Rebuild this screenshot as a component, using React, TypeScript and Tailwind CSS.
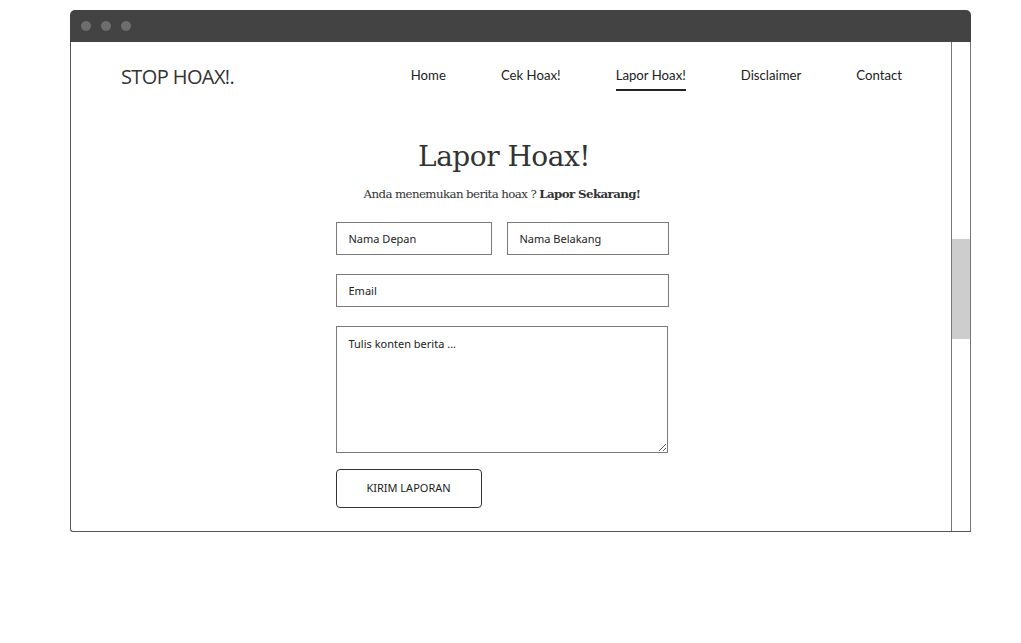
import React from 'react'

const navItems = ['Home', 'Cek Hoax!', 'Lapor Hoax!', 'Disclaimer', 'Contact']

export default function App() {
    return (
        <div className="min-h-[643px] bg-white pt-[10px] pl-[70px]">
            <div className="w-[901px]">
                {/* title bar */}
                <div className="h-[32px] bg-[#434343] rounded-t-[5px] flex items-center gap-[10px] pl-[11px]">
                    {[0, 1, 2].map(i => (
                        <span key={i} className="w-[10px] h-[10px] rounded-full bg-[#6e6e6e]" />
                    ))}
                </div>

                <div className="flex h-[490px] border-l border-b border-[#555] rounded-bl-[3px]">
                    <main className="flex-1 min-w-0 text-[#333]">
                        {/* header */}
                        <header className="flex justify-between items-start pt-[21px] pl-[50px] pr-[49px]">
                            <div className="text-[20px] leading-[28px] font-['Open_Sans',sans-serif] tracking-[-0.6px] text-[#333]">
                                STOP HOAX!.
                            </div>
                            <nav className="flex mt-[2px] gap-[55px] font-['Lato',sans-serif] text-[13.2px] leading-[20px] text-[#222]">
                                {navItems.map(item => (
                                    <a
                                        key={item}
                                        className={
                                            item === 'Lapor Hoax!'
                                                ? 'pb-[4px] border-b-2 border-[#222]'
                                                : 'pb-[4px] border-b-2 border-transparent'
                                        }
                                    >
                                        {item}
                                    </a>
                                ))}
                            </nav>
                        </header>

                        {/* form section */}
                        <section className="flex flex-col items-center pr-[18px]">
                            <h1 className="mt-[48px] ml-[4px] text-[28px] leading-[36px] font-['DejaVu_Serif',serif] tracking-[-0.5px] text-[#333]">
                                Lapor Hoax!
                            </h1>
                            <p className="mt-[10px] text-[11.8px] leading-[18px] font-['DejaVu_Serif',serif] tracking-[-0.6px] text-[#333]">
                                Anda menemukan berita hoax ? <b>Lapor Sekarang!</b>
                            </p>

                            <form className="mt-[19px] w-[333px] flex flex-col font-['Noto_Sans',sans-serif] text-[11px]">
                                <div className="flex gap-[15px]">
                                    <input
                                        placeholder="Nama Depan"
                                        className="w-[156px] h-[33px] border border-[#7a7a7a] px-[12px] outline-none placeholder:text-[#222]"
                                    />
                                    <input
                                        placeholder="Nama Belakang"
                                        className="w-[162px] h-[33px] border border-[#7a7a7a] px-[12px] outline-none placeholder:text-[#222]"
                                    />
                                </div>
                                <input
                                    placeholder="Email"
                                    className="mt-[19px] w-[333px] h-[33px] border border-[#7a7a7a] px-[12px] outline-none placeholder:text-[#222]"
                                />
                                <textarea
                                    placeholder="Tulis konten berita ..."
                                    className="mt-[19px] w-[332px] h-[127px] border border-[#7a7a7a] px-[12px] py-[9px] outline-none placeholder:text-[#222]"
                                />
                                <button
                                    type="button"
                                    className="mt-[16px] w-[146px] h-[39px] border border-[#333] rounded-[4px] text-[11px] text-[#222] uppercase"
                                >
                                    Kirim Laporan
                                </button>
                            </form>
                        </section>
                    </main>

                    {/* scrollbar */}
                    <div className="w-[20px] border-x border-[#777] shrink-0">
                        <div className="mt-[197px] h-[100px] bg-[#cdcdcd]" />
                    </div>
                </div>
            </div>
        </div>
    )
}
